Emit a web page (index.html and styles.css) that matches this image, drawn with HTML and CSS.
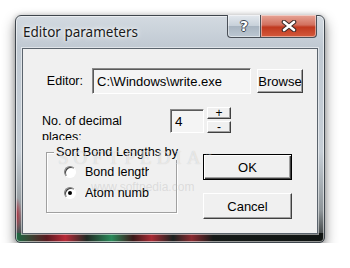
FILE: index.html
```html
<!DOCTYPE html>
<html lang="en">
	<head>
		<meta charset="utf-8"/>
		<title>Editor parameters</title>
		<link rel="stylesheet" href="styles.css">
	</head>
	<body>
		<!--Dialog window-->
		<div class="window">
			<!--Title bar-->
			<div class="titlebar">
				<span class="title">Editor parameters</span>
				<div class="caption-btns">
					<div class="cap-btn help">?</div>
					<div class="cap-btn close">
						<svg viewBox="0 0 16 12" width="16" height="12">
							<path d="M3 2 L13 10 M13 2 L3 10" stroke="#3a2a28" stroke-width="4.6" stroke-linecap="round"/>
							<path d="M3 2 L13 10 M13 2 L3 10" stroke="#fff" stroke-width="2.6" stroke-linecap="round"/>
						</svg>
					</div>
				</div>
			</div>
			<!--Client area-->
			<div class="client">
				<div class="row editor-row">
					<label class="lbl editor-lbl">Editor:</label>
					<div class="field path-field">C:\Windows\write.exe</div>
					<div class="btn browse">Browse</div>
				</div>
				<div class="row dec-row">
					<label class="lbl dec-lbl">No. of decimal places:</label>
					<div class="field num-field">4</div>
					<div class="spin">
						<div class="btn spin-btn">+</div>
						<div class="btn spin-btn">-</div>
					</div>
				</div>
				<div class="row sort-row">
					<div class="group">
						<span class="legend">Sort Bond Lengths by</span>
						<div class="radio"><span class="circle"></span><span class="rtext">Bond length</span></div>
						<div class="radio checked"><span class="circle"></span><span class="rtext">Atom number</span></div>
					</div>
					<div class="actions">
						<div class="btn ok">OK</div>
						<div class="btn cancel">Cancel</div>
					</div>
				</div>
				<!--Watermark-->
				<div class="mark">SOFTPEDIA<sup>™</sup></div>
				<div class="mark-url">www.softpedia.com</div>
			</div>
		</div>
	</body>
</html>
```

FILE: styles.css
```css
/*Basic body design*/
body {
	background-color: #fff;
	margin: 0;
	padding: 0;
	font-family: "Liberation Sans", Arial, sans-serif;
	font-size: 13px;
	color: #000;
}

/*Glass frame*/
div.window {
	box-sizing: border-box;
	width: 310px;
	height: 228px;
	margin: 15px 0 0 15px;
	padding: 0 6px 8px 6px;
	display: flex;
	flex-direction: column;
	border: 1px solid #3f464d;
	border-radius: 6px 6px 5px 5px;
	box-shadow: 0 6px 13px rgba(0, 0, 0, 0.45), 0 0 5px rgba(0, 0, 0, 0.2), inset 0 0 0 1px rgba(255, 255, 255, 0.55);
	background:
		linear-gradient(to right, #1e6a44 0%, #5a1a20 10%, #b82a38 16%, #202a24 23%, #2a8a5a 31%, #3a1818 38%, #a82a34 44%, #1b2220 51%, #8a2a30 57%, #151a18 64%, #101412 100%) bottom / 100% 9px no-repeat,
		radial-gradient(ellipse 6px 18px at 0 88%, #b02a38, transparent),
		radial-gradient(ellipse 60px 14px at 58% 35%, rgba(90, 100, 110, 0.35), transparent),
		linear-gradient(to bottom, #d3dae1 0, #c0c9d2 14%, #c6ced6 60%, #8f969a 86%, #2c3030 100%);
}

/*Title bar*/
div.titlebar {
	height: 32px;
	display: flex;
	align-items: center;
	justify-content: space-between;
	flex-shrink: 0;
}

div.titlebar span.title {
	font-family: "Noto Sans", "Open Sans", sans-serif;
	font-size: 13.5px;
	color: #1a1a1a;
	padding-left: 1px;
	margin-top: -1px;
	text-shadow: 0 0 6px #fff, 0 0 3px #fff;
}

/*Caption buttons*/
div.caption-btns {
	align-self: flex-start;
	display: flex;
	margin-top: -1px;
	margin-right: 1px;
}

div.cap-btn {
	height: 22px;
	display: flex;
	align-items: center;
	justify-content: center;
	border: 1px solid #4a5058;
	border-top: none;
	box-shadow: inset 0 0 0 1px rgba(255, 255, 255, 0.45);
}

div.cap-btn.help {
	width: 32px;
	border-right: none;
	border-radius: 0 0 0 4px;
	background: linear-gradient(to bottom, #e4e9ee 0, #c8d1da 48%, #a9b5c1 52%, #bcc7d2 100%);
	font-family: "DejaVu Sans", sans-serif;
	font-weight: bold;
	font-size: 14px;
	color: #fff;
	text-shadow: 1px 0 #3c4650, -1px 0 #3c4650, 0 1px #3c4650, 0 -1px #3c4650;
}

div.cap-btn.close {
	width: 55px;
	border-radius: 0 0 4px 0;
	background: linear-gradient(to bottom, #e7a597 0, #d2705e 45%, #c0391f 55%, #d45a3c 100%);
}

/*Client area*/
div.client {
	position: relative;
	flex: 1;
	background-color: #f0f0f0;
	border: 1px solid #5b646d;
	box-shadow: 0 0 0 1px rgba(255, 255, 255, 0.5);
}

div.row {
	display: flex;
}

/*Editor row*/
div.editor-row {
	align-items: center;
	padding-top: 19px;
}

label.lbl {
	font-size: 12.5px;
	line-height: 16px;
}

label.editor-lbl {
	width: 60px;
	text-align: right;
}

/*Sunken fields*/
div.field {
	box-sizing: border-box;
	background-color: #f4f4f4;
	border: 1px solid;
	border-color: #8a8a8a #fff #fff #8a8a8a;
	box-shadow: inset 1px 1px 0 #5a5a5a;
	display: flex;
	align-items: center;
	padding-left: 4px;
	white-space: nowrap;
	overflow: hidden;
}

div.path-field {
	width: 159px;
	height: 26px;
	margin-left: 9px;
}

/*Raised buttons*/
div.btn {
	box-sizing: border-box;
	background-color: #f0f0f0;
	border: 1px solid;
	border-color: #fff #404040 #404040 #fff;
	box-shadow: inset -1px -1px 0 #a0a0a0;
	display: flex;
	align-items: center;
	justify-content: center;
	white-space: nowrap;
	overflow: hidden;
}

div.browse {
	width: 46px;
	height: 24px;
	margin-left: 6px;
}

/*Decimal places row*/
div.dec-row {
	margin-top: 13px;
	align-items: flex-start;
}

label.dec-lbl {
	width: 100px;
	height: 27px;
	overflow: hidden;
	margin: 6px 0 0 19px;
}

div.num-field {
	width: 34px;
	height: 24px;
	margin: 2px 0 0 28px;
	font-size: 13.5px;
}

div.spin {
	display: flex;
	flex-direction: column;
	gap: 2px;
	margin-left: 3px;
}

div.spin-btn {
	width: 24px;
	height: 12px;
	font-size: 12px;
	line-height: 10px;
}

/*Sort row*/
div.sort-row {
	margin-top: 12px;
}

div.group {
	position: relative;
	box-sizing: border-box;
	width: 131px;
	height: 61px;
	margin-left: 23px;
	padding: 11px 0 0 17px;
	border: 1px solid #a0a0a0;
	box-shadow: inset 1px 1px 0 #fff, 1px 1px 0 #fff;
	display: flex;
	flex-direction: column;
	gap: 5px;
}

span.legend {
	position: absolute;
	top: -9px;
	left: 7px;
	padding: 0 2px;
	line-height: 16px;
	font-size: 12.7px;
	background-color: #f0f0f0;
	white-space: nowrap;
}

div.radio {
	display: flex;
	align-items: center;
	height: 16px;
	gap: 9px;
}

span.circle {
	box-sizing: border-box;
	width: 12px;
	height: 12px;
	border-radius: 50%;
	background-color: #fff;
	border: 1px solid;
	border-color: #808080 #fff #fff #808080;
	box-shadow: inset 1px 1px 0 #404040;
	display: flex;
	align-items: center;
	justify-content: center;
}

div.radio.checked span.circle::after {
	content: "";
	width: 4px;
	height: 4px;
	border-radius: 50%;
	background-color: #000;
}

span.rtext {
	width: 64px;
	white-space: nowrap;
	overflow: hidden;
	font-size: 12.5px;
}

/*Dialog buttons*/
div.actions {
	display: flex;
	flex-direction: column;
	gap: 13px;
	margin: 2px 0 0 26px;
}

div.actions div.btn {
	width: 89px;
	height: 26px;
}

div.btn.ok {
	border: 1px solid #000;
	box-shadow: inset 1px 1px 0 #fff, inset -1px -1px 0 #404040, inset -2px -2px 0 #a0a0a0;
}

/*Watermark*/
div.mark {
	position: absolute;
	left: 35px;
	top: 98px;
	font-family: "Liberation Serif", serif;
	font-size: 19px;
	letter-spacing: 5px;
	color: rgba(255, 255, 255, 0.55);
	text-shadow: 0 0 1px rgba(0, 0, 0, 0.18);
	pointer-events: none;
}

div.mark sup {
	font-size: 6px;
	letter-spacing: 0;
}

div.mark-url {
	position: absolute;
	left: 68px;
	top: 131px;
	font-size: 12px;
	color: rgba(170, 170, 170, 0.3);
	pointer-events: none;
}
```
